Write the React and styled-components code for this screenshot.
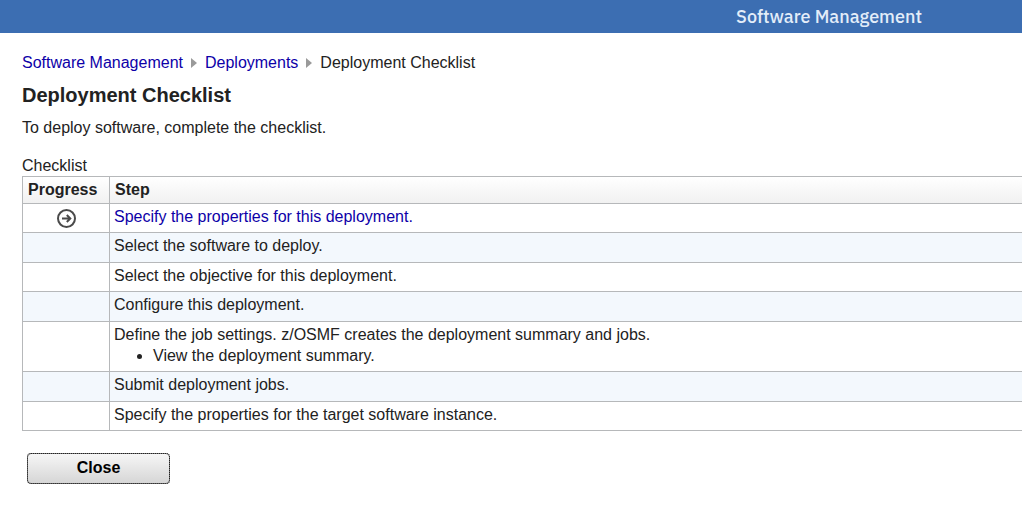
import React from "react";
import styled, { createGlobalStyle } from "styled-components";

const GlobalStyle = createGlobalStyle`
  * { box-sizing: border-box; }
  body {
    margin: 0;
    background: #fff;
    color: #222;
    font-family: "Liberation Sans", Arial, sans-serif;
    font-size: 16px;
    line-height: 21px;
  }
`;

const Banner = styled.header`
  display: flex;
  align-items: center;
  justify-content: flex-end;
  height: 33px;
  padding-right: 100px;
  background: #3c6eb2;
  color: #e3edf9;
  font-family: "IBM Plex Sans", "Noto Sans", sans-serif;
  font-size: 18px;
  font-weight: 500;
`;

const Page = styled.main`
  padding: 19px 0 24px 22px;
`;

const Link = styled.a`
  color: #0d00a8;
  text-decoration: none;
  &:hover { text-decoration: underline; }
`;

const Trail = styled.nav`
  display: flex;
  align-items: center;
  gap: 8px;
`;

const Arrow = styled.svg`
  width: 6px;
  height: 10px;
  fill: #9a9a9a;
`;

const Title = styled.h1`
  margin: 8px 0;
  font-size: 20px;
  line-height: 28px;
`;

const Intro = styled.p`
  margin: 0 0 17px;
`;

const Checklist = styled.table`
  width: 100%;
  border-spacing: 0;
  border-left: 1px solid #b6b8ba;
  border-bottom: 1px solid #b6b8ba;
`;

const Caption = styled.caption`
  text-align: left;
`;

const HeadCell = styled.th`
  width: ${(p) => (p.$narrow ? "87px" : "auto")};
  padding: 2px 5px 3px;
  border-top: 1px solid #b6b8ba;
  border-right: ${(p) => (p.$narrow ? "1px solid #b6b8ba" : "0")};
  background: linear-gradient(#fff, #f1f1f1);
  text-align: left;
`;

const StatusCell = styled.td`
  padding: 0;
  border-top: 1px solid #b6b8ba;
  border-right: 1px solid #b6b8ba;
  text-align: center;
`;

const StepCell = styled.td`
  padding: 2px 4px 5px;
  border-top: 1px solid #b6b8ba;
`;

const StepRow = styled.tr`
  &:nth-child(even) { background: #f3f8fd; }
  &:nth-child(even) ${StepCell} { padding-bottom: 6px; }
`;

const SubSteps = styled.ul`
  margin: 0;
  padding-left: 39px;
`;

const NextIcon = styled.svg`
  display: block;
  width: 20px;
  height: 20px;
  margin: 0 auto;
  fill: none;
  stroke: #4a4a4a;
  stroke-width: 2;
`;

const CloseButton = styled.button`
  display: block;
  width: 143px;
  height: 31px;
  margin: 22px 5px 0;
  padding: 0 0 1px;
  border: 1px solid #777;
  border-radius: 4px;
  outline: 1px dotted #222;
  outline-offset: -1px;
  background: linear-gradient(#f6f6f6, #d6d6d6);
  color: #000;
  font: bold 16px "Liberation Sans", Arial, sans-serif;
`;

const steps = [
  { text: "Specify the properties for this deployment.", current: true },
  { text: "Select the software to deploy." },
  { text: "Select the objective for this deployment." },
  { text: "Configure this deployment." },
  {
    text: "Define the job settings. z/OSMF creates the deployment summary and jobs.",
    items: ["View the deployment summary."],
  },
  { text: "Submit deployment jobs." },
  { text: "Specify the properties for the target software instance." },
];

function Separator() {
  return (
    <Arrow viewBox="0 0 6 10" aria-hidden="true">
      <path d="M0 0L6 5L0 10Z" />
    </Arrow>
  );
}

function Step({ text, current, items }) {
  return (
    <StepRow>
      <StatusCell>
        {current && (
          <NextIcon viewBox="0 0 20 20" role="img" aria-label="Next step">
            <circle cx="10.5" cy="10.5" r="8.5" />
            <path d="M6 10.5H14M10.8 7L14.3 10.5L10.8 14" />
          </NextIcon>
        )}
      </StatusCell>
      <StepCell>
        {current ? <Link href="#properties">{text}</Link> : text}
        {items && (
          <SubSteps>
            {items.map((item) => (
              <li key={item}>{item}</li>
            ))}
          </SubSteps>
        )}
      </StepCell>
    </StepRow>
  );
}

export default function App() {
  return (
    <>
      <GlobalStyle />
      <Banner>Software Management</Banner>
      <Page>
        <Trail aria-label="Breadcrumb">
          <Link href="#software">Software Management</Link>
          <Separator />
          <Link href="#deployments">Deployments</Link>
          <Separator />
          <span>Deployment Checklist</span>
        </Trail>
        <Title>Deployment Checklist</Title>
        <Intro>To deploy software, complete the checklist.</Intro>
        <Checklist>
          <Caption>Checklist</Caption>
          <thead>
            <tr>
              <HeadCell $narrow scope="col">Progress</HeadCell>
              <HeadCell scope="col">Step</HeadCell>
            </tr>
          </thead>
          <tbody>
            {steps.map((step) => (
              <Step key={step.text} {...step} />
            ))}
          </tbody>
        </Checklist>
        <CloseButton type="button">Close</CloseButton>
      </Page>
    </>
  );
}
